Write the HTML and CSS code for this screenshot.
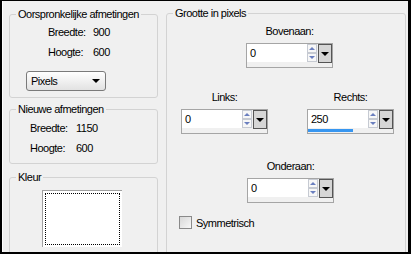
FILE: index.html
```html
<!DOCTYPE html>
<html lang="nl">
<head>
  <meta charset="UTF-8" />
  <title>Canvasgrootte</title>
  <link rel="stylesheet" href="styles.css">
</head>
<body>
  <div class="dialog">
    <div class="left">
      <fieldset class="group g-orig">
        <legend>Oorspronkelijke afmetingen</legend>
        <div class="dims">
          <span>Breedte:</span><span>900</span>
          <span>Hoogte:</span><span>600</span>
        </div>
        <div class="unit">Pixels <span class="caret"></span></div>
      </fieldset>

      <fieldset class="group g-new">
        <legend>Nieuwe afmetingen</legend>
        <div class="dims">
          <span>Breedte:</span><span>1150</span>
          <span>Hoogte:</span><span>600</span>
        </div>
      </fieldset>

      <fieldset class="group g-color">
        <legend>Kleur</legend>
        <div class="swatch"><div class="focus"></div></div>
      </fieldset>
    </div>

    <fieldset class="group g-size">
      <legend>Grootte in pixels</legend>

      <div class="edge-top">
        <div class="field">
          <label>Bovenaan:</label>
          <div class="spin">
            <div class="spin-main">
              <div class="spin-row">
                <div class="spin-val">0</div>
                <div class="arrows"><span><i class="up"></i></span><span><i class="down"></i></span></div>
              </div>
            </div>
            <div class="drop"><span class="caret"></span></div>
          </div>
        </div>
      </div>

      <div class="sides">
        <div class="field">
          <label>Links:</label>
          <div class="spin">
            <div class="spin-main">
              <div class="spin-row">
                <div class="spin-val">0</div>
                <div class="arrows"><span><i class="up"></i></span><span><i class="down"></i></span></div>
              </div>
            </div>
            <div class="drop"><span class="caret"></span></div>
          </div>
        </div>
        <div class="field">
          <label>Rechts:</label>
          <div class="spin">
            <div class="spin-main">
              <div class="spin-row">
                <div class="spin-val">250</div>
                <div class="arrows"><span><i class="up"></i></span><span><i class="down"></i></span></div>
              </div>
              <div class="bar" style="width: 45px"></div>
            </div>
            <div class="drop"><span class="caret"></span></div>
          </div>
        </div>
      </div>

      <div class="edge-bottom">
        <div class="field">
          <label>Onderaan:</label>
          <div class="spin">
            <div class="spin-main">
              <div class="spin-row">
                <div class="spin-val">0</div>
                <div class="arrows"><span><i class="up"></i></span><span><i class="down"></i></span></div>
              </div>
            </div>
            <div class="drop"><span class="caret"></span></div>
          </div>
        </div>
      </div>

      <div class="check-row">
        <span class="checkbox"></span>
        <span>Symmetrisch</span>
      </div>
    </fieldset>
  </div>
</body>
</html>
```

FILE: styles.css
```css
* {
  box-sizing: border-box;
}
body {
  margin: 0;
  font-family: "Liberation Sans", Arial, sans-serif;
  font-size: 11px;
  letter-spacing: -0.5px;
  color: #000;
}
.dialog {
  width: 411px;
  height: 254px;
  overflow: hidden;
  display: flex;
  background: #f0f0f0;
  border-style: solid;
  border-color: #000;
  border-width: 1px 3px 2px 2px;
}
.left {
  width: 164px;
  flex-shrink: 0;
  padding: 7px 0 0 7px;
  display: flex;
  flex-direction: column;
  border-left: 1px solid #fff;
}
.group {
  margin: 0;
  padding: 0;
  min-width: 0;
  border: 1px solid #d3d3d3;
  border-radius: 3px;
}
.group legend {
  margin-left: 6px;
  padding: 0 2px;
  line-height: 13px;
}
.g-orig {
  width: 149px;
  height: 90px;
  margin-left: -1px;
  flex-shrink: 0;
}
.g-new {
  width: 149px;
  height: 61px;
  margin: 5px 0 0 -1px;
  flex-shrink: 0;
}
.g-color {
  width: 149px;
  height: 100px;
  margin: 7px 0 0 -1px;
  flex-shrink: 0;
}
.dims {
  display: grid;
  grid-template-columns: 45px auto;
  line-height: 20px;
  margin: 1px 0 0 38px;
}
.g-new .dims {
  grid-template-columns: 46px auto;
  margin: 2px 0 0 20px;
}
.unit {
  width: 80px;
  height: 20px;
  margin: 9px 0 0 16px;
  padding: 0 5px 0 4px;
  display: flex;
  align-items: center;
  justify-content: space-between;
  border: 1px solid #7a7a7a;
  border-radius: 3px;
  background: linear-gradient(#ffffff, #e2e2e2);
}
.caret {
  width: 0;
  height: 0;
  border-left: 4px solid transparent;
  border-right: 4px solid transparent;
  border-top: 4px solid #000;
}
.swatch {
  width: 80px;
  height: 57px;
  margin: 6px 0 0 32px;
  padding: 2px;
  background: #fff;
  border-top: 1px solid #a0a0a0;
  border-left: 1px solid #a0a0a0;
}
.focus {
  height: 100%;
  border: 1px dotted #000;
}

/* grootte in pixels */
.g-size {
  width: 240px;
  height: 260px;
  margin-top: 6px;
  flex-shrink: 0;
}
.field {
  width: 87px;
  display: flex;
  flex-direction: column;
  align-items: center;
}
.field label {
  line-height: 13px;
  margin-bottom: 5px;
}
.edge-top {
  padding: 5px 0 0 79px;
}
.sides {
  display: flex;
  justify-content: space-between;
  padding: 23px 11px 0 14px;
}
.edge-bottom {
  padding: 26px 0 0 80px;
}
.spin {
  width: 87px;
  height: 25px;
  display: flex;
  border: 1px solid #a5a5a5;
  background: #f0f0f0;
}
.spin-main {
  width: 70px;
  display: flex;
  flex-direction: column;
}
.spin-row {
  display: flex;
  height: 18px;
}
.spin-val {
  width: 60px;
  padding-left: 3px;
  line-height: 18px;
  background: #fff;
}
.arrows {
  width: 10px;
  display: flex;
  flex-direction: column;
  background: #fff;
}
.arrows span {
  flex: 1;
  display: flex;
  align-items: center;
  justify-content: center;
  border: 1px solid #c6cad2;
  background: #f7f7f7;
}
.arrows i {
  width: 0;
  height: 0;
  border-left: 3px solid transparent;
  border-right: 3px solid transparent;
}
.arrows .up {
  border-bottom: 3px solid #6a7fbf;
}
.arrows .down {
  border-top: 3px solid #6a7fbf;
}
.bar {
  height: 3px;
  margin-top: 1px;
  background: #3796f0;
}
.drop {
  width: 14px;
  height: 19px;
  margin-left: 1px;
  display: flex;
  align-items: center;
  justify-content: center;
  border: 1px solid #555;
  background: #d6d6d6;
}
.check-row {
  display: flex;
  align-items: center;
  padding: 13px 0 0 12px;
}
.checkbox {
  width: 13px;
  height: 13px;
  margin-right: 4px;
  border: 1px solid #8a8a8a;
  background: linear-gradient(135deg, #d8d8d8, #f8f8f8);
}
```
